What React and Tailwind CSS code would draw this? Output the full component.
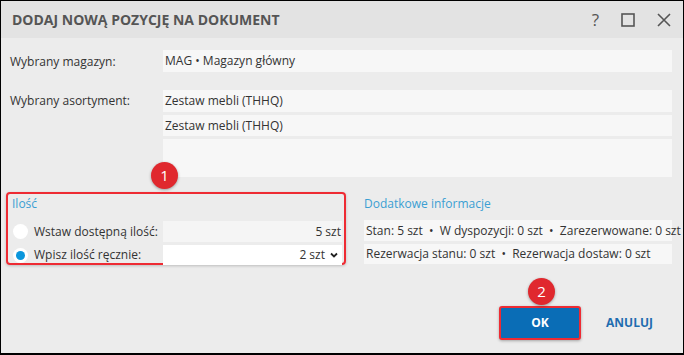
import React from 'react';

const Badge = ({ n, className }) => (
  <div
    className={`absolute w-[27px] h-[27px] rounded-full bg-[#e0282e] text-white flex items-center justify-center text-[15px] shadow-[0_1px_3px_rgba(0,0,0,0.35)] ${className}`}
  >
    {n}
  </div>
);

const Field = ({ children, className = '' }) => (
  <div className={`bg-[#f7f7f7] flex items-center px-[2px] text-[12px] text-[#333] ${className}`}>{children}</div>
);

export default function App() {
  return (
    <div
      className="relative w-[684px] h-[355px] bg-[#ececec] border border-black border-b-2 overflow-hidden text-[#333]"
      style={{ fontFamily: '"Open Sans", "Noto Sans", sans-serif' }}
    >
      {/* Header */}
      <div className="h-[37px] bg-[#e3e3e3] flex items-center pl-[11px] pr-[12px]">
        <div className="font-bold text-[14px] text-[#555]">DODAJ NOWĄ POZYCJĘ NA DOKUMENT</div>
        <div className="ml-auto flex items-center gap-[22px] text-[#555]">
          <span className="text-[17px] leading-none">?</span>
          <svg width="14" height="14" viewBox="0 0 14 14">
            <rect x="1" y="1" width="12" height="12" fill="none" stroke="#555" strokeWidth="1.6" />
          </svg>
          <svg width="14" height="14" viewBox="0 0 14 14">
            <path d="M1 1 L13 13 M13 1 L1 13" stroke="#555" strokeWidth="1.6" />
          </svg>
        </div>
      </div>

      {/* Body */}
      <div className="pl-[9px] pr-[11px]">
        <div className="flex mt-[12px]">
          <div className="w-[153px] text-[12px] pt-[3px]">Wybrany magazyn:</div>
          <Field className="flex-1 h-[22px]">MAG • Magazyn główny</Field>
        </div>

        <div className="flex mt-[18px]">
          <div className="w-[153px] text-[12px] pt-[2px]">Wybrany asortyment:</div>
          <div className="flex-1 flex flex-col gap-[3px]">
            <Field className="h-[22px]">Zestaw mebli (THHQ)</Field>
            <Field className="h-[21px]">Zestaw mebli (THHQ)</Field>
            <Field className="h-[38px]" />
          </div>
        </div>

        <div className="flex mt-[15px]">
          {/* Ilość */}
          <div className="shrink-0 -ml-[4px] w-[340px] h-[73px] border-2 border-[#ee2b33] rounded-[4px] pl-[4px] pr-[2px] shadow-[0_1px_3px_rgba(0,0,0,0.2)]">
            <div className="text-[12px] text-[#3b9fd3] leading-none mt-[4px]">Ilość</div>
            <div className="flex items-center mt-[11px] h-[21px]">
              <div className="w-[15px] h-[15px] rounded-full bg-white mr-[6px] ml-[1px]" />
              <div className="w-[129px] text-[12px] whitespace-nowrap">Wstaw dostępną ilość:</div>
              <div className="flex-1 h-[21px] bg-[#f5f5f5] flex items-center justify-end text-[12px] pr-[1px]">5 szt</div>
            </div>
            <div className="flex items-center mt-[3px] h-[20px]">
              <div className="w-[15px] h-[15px] rounded-full bg-white mr-[6px] ml-[1px] flex items-center justify-center">
                <div className="w-[9px] h-[9px] rounded-full bg-[#0a96dc]" />
              </div>
              <div className="w-[129px] text-[12px] whitespace-nowrap">Wpisz ilość ręcznie:</div>
              <div className="flex-1 h-[20px] bg-white flex items-center justify-end text-[12px] pr-[4px]">
                2 szt
                <svg className="ml-[5px]" width="8" height="6" viewBox="0 0 8 6">
                  <path d="M1 1.5 L4 4.5 L7 1.5" fill="none" stroke="#222" strokeWidth="1.8" />
                </svg>
              </div>
            </div>
          </div>

          {/* Dodatkowe informacje */}
          <div className="ml-[18px] flex-1 min-w-0">
            <div className="text-[12px] text-[#3b9fd3] leading-none mt-[6px]">Dodatkowe informacje</div>
            <div className="mt-[10px] flex flex-col gap-[3px]">
              <Field className="h-[21px] whitespace-nowrap">Stan: 5 szt&nbsp; •&nbsp; W dyspozycji: 0 szt&nbsp; •&nbsp; Zarezerwowane: 0 szt</Field>
              <Field className="h-[20px] whitespace-nowrap">Rezerwacja stanu: 0 szt&nbsp; •&nbsp; Rezerwacja dostaw: 0 szt</Field>
            </div>
          </div>
        </div>

        <div className="flex items-center justify-end mt-[41px] pr-[19px]">
          <button className="w-[82px] h-[34px] bg-[#0a6db6] border-2 border-[#ee2b33] rounded-[3px] text-white font-bold text-[12px] shadow-[0_1px_3px_rgba(0,0,0,0.3)]">
            OK
          </button>
          <button className="ml-[25px] text-[#1f6db0] font-bold text-[12px]">ANULUJ</button>
        </div>
      </div>

      <Badge n="1" className="left-[150px] top-[161px]" />
      <Badge n="2" className="left-[527px] top-[277px]" />
    </div>
  );
}
